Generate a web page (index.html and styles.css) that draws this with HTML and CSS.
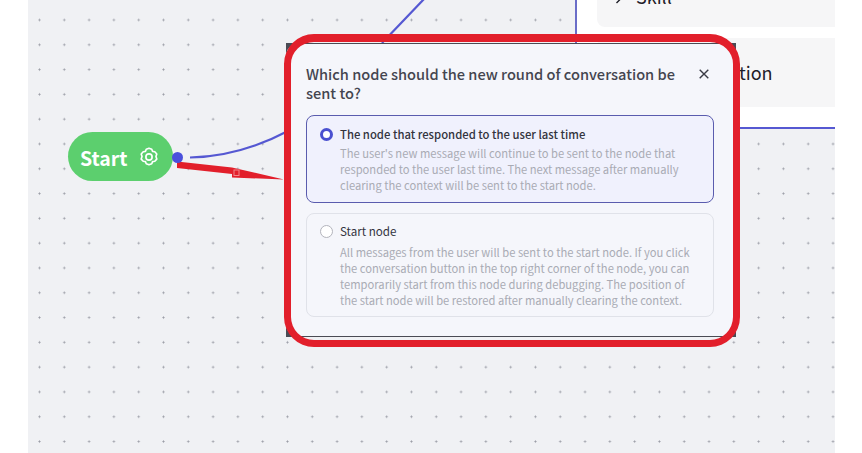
FILE: index.html
```html
<!DOCTYPE html>
<html lang="en">
<head>
    <meta charset="UTF-8">
    <meta name="viewport" content="width=device-width, initial-scale=1.0">
    <title>Dialog flow</title>
    <link rel="stylesheet" href="styles.css">
</head>
<body>
    <div class="canvas">
        <!-- edges and annotation arrow -->
        <svg class="edges" width="807" height="453" viewBox="28 0 807 453">
            <path d="M190 157.5 C 225 157 258 147 290 130 M382 43 L425 -2" fill="none" stroke="#5558d2" stroke-width="2.2"/>
            <polygon points="177,161.5 232,167.5 284,179.5 232,177.5 232,174 177,168" fill="#e21f2b"/>
            <rect x="234" y="170" width="5" height="5.5" fill="none" stroke="#f2868b"/>
        </svg>

        <div class="start-node">
            <span class="start-label">Start</span>
            <svg class="gear" width="22" height="22" viewBox="0 0 24 24" fill="none" stroke="#fff" stroke-width="1.8" stroke-linejoin="round">
                <path d="M12 2.5l3 1.1.9 2.3 2.4.4 2.2 2.4-.9 2.8.9 2.8-2.2 2.4-2.4.4-.9 2.3-3 1.1-3-1.1-.9-2.3-2.4-.4-2.2-2.4.9-2.8-.9-2.8 2.2-2.4 2.4-.4.9-2.3z"/>
                <circle cx="12" cy="12" r="3.4"/>
            </svg>
        </div>
        <div class="port"></div>

        <div class="panel">
            <div class="panel-card card-skill">
                <svg class="chevron" width="8" height="12" viewBox="0 0 8 12"><path d="M1.5 1l5 5-5 5" fill="none" stroke="#1f2029" stroke-width="1.4"/></svg>
                <span>Skill</span>
            </div>
            <div class="panel-card card-suggest">
                <svg class="chevron" width="8" height="12" viewBox="0 0 8 12"><path d="M1.5 1l5 5-5 5" fill="none" stroke="#1f2029" stroke-width="1.4"/></svg>
                <span>Auto-suggestion</span>
            </div>
        </div>

        <div class="modal-back">
            <div class="modal">
                <div class="modal-header">
                    <div class="modal-title">Which node should the new round of conversation be sent to?</div>
                    <svg class="close" width="10" height="10" viewBox="0 0 10 10">
                        <path d="M.7.7l8.6 8.6M9.3.7L.7 9.3" stroke="#3a3b45" stroke-width="1.4"/>
                    </svg>
                </div>
                <div class="option selected">
                    <span class="radio"></span>
                    <div>
                        <div class="option-title">The node that responded to the user last time</div>
                        <div class="option-desc">The user's new message will continue to be sent to the node that responded to the user last time. The next message after manually clearing the context will be sent to the start node.</div>
                    </div>
                </div>
                <div class="option start-option">
                    <span class="radio"></span>
                    <div>
                        <div class="option-title">Start node</div>
                        <div class="option-desc">All messages from the user will be sent to the start node. If you click the conversation button in the top right corner of the node, you can temporarily start from this node during debugging. The position of the start node will be restored after manually clearing the context.</div>
                    </div>
                </div>
            </div>
        </div>

        <!-- red annotation ring -->
        <div class="ring"></div>
    </div>
</body>
</html>
```

FILE: styles.css
```css
body {
    margin: 0;
    height: 453px;
    overflow: hidden;
    background-color: #ffffff;
    font-family: "Noto Sans CJK SC", "Noto Sans", sans-serif;
}
.canvas {
    position: relative;
    margin-left: 28px;
    width: 807px;
    height: 453px;
    background-color: #f0f1f4;
    background-image: radial-gradient(circle at center, #9a9ca5 0, #a5a7b0 0.8px, transparent 1.4px);
    background-size: 24.8px 24.8px;
    background-position: -0.9px 7.6px;
    overflow: hidden;
}
.edges {
    position: absolute;
    left: 0;
    top: 0;
}
.start-node {
    position: absolute;
    left: 40px;
    top: 132px;
    width: 105px;
    height: 49px;
    box-sizing: border-box;
    padding: 2px 0 0 12px;
    border-radius: 25px;
    background-color: #5ccf6e;
    color: #ffffff;
    display: flex;
    align-items: center;
    gap: 10px;
}
.start-label {
    font-size: 19.5px;
    font-weight: 700;
}
.gear {
    margin-top: -2px;
}
.port {
    position: absolute;
    left: 144px;
    top: 152px;
    width: 11px;
    height: 11px;
    border-radius: 50%;
    background-color: #4a50dc;
}
.panel {
    position: absolute;
    left: 547px;
    top: -40px;
    width: 260px;
    height: 169px;
    box-sizing: border-box;
    border-left: 2px solid #6a6dc8;
    border-bottom: 2px solid #5558d2;
    padding-left: 20px;
    background-color: #ffffff;
    display: flex;
    flex-direction: column;
    gap: 11px;
}
.panel-card {
    background-color: #f6f6f7;
    border-radius: 8px 0 0 8px;
    display: flex;
    align-items: center;
    gap: 13px;
    padding-left: 18px;
    font-size: 18px;
    color: #1f2029;
}
.card-skill {
    height: 67px;
    box-sizing: border-box;
    align-items: flex-start;
    padding-top: 23px;
}
.card-skill .chevron {
    margin-top: 9px;
}
.card-suggest {
    height: 69px;
    box-sizing: border-box;
    padding-bottom: 2px;
}
.chevron {
    flex: none;
}
.modal-back {
    position: absolute;
    left: 258px;
    top: 43px;
    width: 450px;
    height: 294px;
    box-sizing: border-box;
    padding: 1px 0;
    background-color: #4a4b54;
}
.modal {
    height: 100%;
    box-sizing: border-box;
    padding: 20px 22px 0 20px;
    border-radius: 12px;
    background-color: #f5f6fb;
}
.modal-header {
    display: flex;
    align-items: flex-start;
    justify-content: space-between;
    padding-right: 5px;
    margin-bottom: 13px;
}
.modal-title {
    width: 375px;
    font-size: 14.6px;
    font-weight: 500;
    line-height: 19px;
    color: #44454f;
}
.close {
    margin-top: 5px;
}
.option {
    display: flex;
    gap: 7px;
    padding: 9px 14px 9px 13px;
    margin-bottom: 10px;
    border: 1px solid #e0e2e9;
    border-radius: 8px;
}
.option.selected {
    border-color: #5a5cae;
    background-color: #f0f1fd;
}
.option.start-option {
    padding-top: 8px;
    padding-bottom: 8px;
}
.radio {
    flex: none;
    width: 13px;
    height: 13px;
    margin-top: 3px;
    box-sizing: border-box;
    border: 1px solid #b3b4bc;
    border-radius: 50%;
    background-color: #ffffff;
}
.selected .radio {
    border: 3.5px solid #4a50d0;
}
.option-title {
    font-size: 11.6px;
    line-height: 18px;
    color: #33343e;
    margin-bottom: 2px;
}
.start-option .option-title {
    margin-bottom: 4px;
}
.selected .option-title {
    font-size: 11.3px;
    font-weight: 500;
}
.option-desc {
    font-size: 11.2px;
    line-height: 16px;
    color: #a9abb4;
}
.ring {
    position: absolute;
    left: 256px;
    top: 34px;
    width: 456px;
    height: 313px;
    box-sizing: border-box;
    border: 7px solid #e21f2b;
    border-top-width: 8px;
    border-radius: 30px;
}
```
